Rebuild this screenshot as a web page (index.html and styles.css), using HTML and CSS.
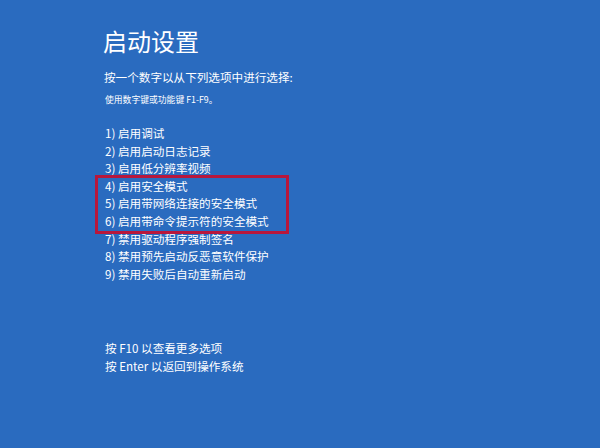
FILE: index.html
```html
<!DOCTYPE html>
<html lang="zh-CN">
<head>
<meta charset="utf-8">
<title>启动设置</title>
<link rel="stylesheet" href="styles.css">
</head>
<body>
<main class="screen">
  <h1 class="title">启动设置</h1>
  <p class="prompt">按一个数字以从下列选项中进行选择:</p>
  <p class="hint">使用数字键或功能键 F1-F9。</p>
  <div class="options">
    <div class="opt">1) 启用调试</div>
    <div class="opt">2) 启用启动日志记录</div>
    <div class="opt">3) 启用低分辨率视频</div>
    <div class="highlight">
      <div class="opt">4) 启用安全模式</div>
      <div class="opt">5) 启用带网络连接的安全模式</div>
      <div class="opt">6) 启用带命令提示符的安全模式</div>
    </div>
    <div class="opt">7) 禁用驱动程序强制签名</div>
    <div class="opt">8) 禁用预先启动反恶意软件保护</div>
    <div class="opt">9) 禁用失败后自动重新启动</div>
  </div>
  <div class="footer">
    <div class="opt">按 F10 以查看更多选项</div>
    <div class="opt">按 Enter 以返回到操作系统</div>
  </div>
</main>
</body>
</html>
```
FILE: styles.css
```css
html, body {
  margin: 0;
  padding: 0;
  height: 100%;
}
body {
  background: #2a6bbf;
  color: #ffffff;
  font-family: "Noto Sans CJK SC", "Noto Sans", sans-serif;
  overflow: hidden;
}
.screen {
  padding: 26px 0 0 103px;
}
.title {
  margin: 0;
  font-size: 24px;
  font-weight: 400;
  line-height: 30px;
}
.prompt {
  margin: 13px 0 0 1px;
  font-size: 11.6px;
  line-height: 16px;
}
.hint {
  margin: 9px 0 0 2px;
  font-size: 8.8px;
  line-height: 12px;
}
.options {
  margin-top: 19px;
  margin-left: 2px;
}
.opt {
  font-size: 11.6px;
  line-height: 17.6px;
  white-space: nowrap;
}
.highlight {
  margin: -3px 0 -3px -10px;
  padding: 0 0 0 7px;
  border: 3px solid #b8173c;
  width: 181px;
  box-sizing: content-box;
}
.footer {
  margin-top: 57px;
  margin-left: 2px;
}
```
